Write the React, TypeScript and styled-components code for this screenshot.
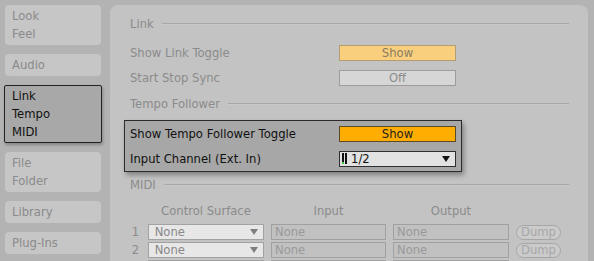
import styled, { createGlobalStyle, css } from 'styled-components';

const GlobalStyle = createGlobalStyle`
  html, body {
    margin: 0;
    padding: 0;
    background: #b3b3b3;
    font-family: "DejaVu Sans", "Liberation Sans", sans-serif;
    font-size: 11.6px;
    overflow: hidden;
  }
`;

const FADED = '#8b8b8b';

const Page = styled.div`
  display: flex;
  height: 261px;
  padding: 5px 6px 0 5px;
  box-sizing: border-box;
  gap: 9px;
  overflow: hidden;
`;

const Sidebar = styled.div`
  display: flex;
  flex-direction: column;
  gap: 9px;
  width: 96px;
  flex-shrink: 0;
`;

const Tab = styled.div<{ $active?: boolean }>`
  box-sizing: border-box;
  padding: 2px 7px;
  line-height: 18px;
  border-radius: 4px;
  background: #c6c6c6;
  color: ${FADED};
  ${({ $active }) =>
    $active &&
    css`
      margin: 0 -1px;
      padding: 1px 7px;
      border-radius: 2px;
      border: 1px solid #232323;
      background: #a8a8a8;
      color: #111;
      box-shadow: 1px 2px 3px rgba(0, 0, 0, 0.25);
    `}
`;

const Panel = styled.div`
  flex: 1;
  background: #c3c3c3;
  border-radius: 8px 8px 0 0;
  padding: 9px 19px 0 20px;
`;

const SectionHeader = styled.div`
  display: flex;
  align-items: center;
  gap: 8px;
  height: 20px;
  color: ${FADED};
`;

const Rule = styled.div`
  flex: 1;
  border-top: 1px solid #a8a8a8;
  border-bottom: 1px solid #c9c9c9;
`;

const Rows = styled.div`
  margin: 6px 0 4px;
`;

const Callout = styled.div`
  width: fit-content;
  margin: 6px 0 3px -6px;
  padding: 0 5px;
  border: 1px solid #2b2b2b;
  background: #a7a7a7;
  box-shadow: 2px 3px 5px rgba(0, 0, 0, 0.35);
  color: #111;
`;

const Row = styled.div`
  display: grid;
  grid-template-columns: 209px 117px;
  align-items: center;
  height: 25px;
`;

const Label = styled.span<{ $strong?: boolean }>`
  color: ${({ $strong }) => ($strong ? '#111' : FADED)};
  white-space: nowrap;
`;

const toggleColors = {
  pale: { bg: '#f9cf7e', border: '#b39d74', text: '#8a7c60' },
  off: { bg: '#d6d6d6', border: '#9c9c9c', text: '#8c8c8c' },
  on: { bg: '#ffad00', border: '#5c4a24', text: '#1d1d1d' },
};

const Toggle = styled.div<{ $variant: keyof typeof toggleColors }>`
  box-sizing: border-box;
  height: 16px;
  line-height: 14px;
  text-align: center;
  background: ${({ $variant }) => toggleColors[$variant].bg};
  border: 1px solid ${({ $variant }) => toggleColors[$variant].border};
  color: ${({ $variant }) => toggleColors[$variant].text};
`;

const Select = styled.div<{ $faded?: boolean }>`
  box-sizing: border-box;
  height: 16px;
  display: flex;
  align-items: center;
  gap: 4px;
  padding: 0 5px 0 2px;
  background: ${({ $faded }) => ($faded ? '#e7e7e7' : '#e2e2e2')};
  border: 1px solid ${({ $faded }) => ($faded ? '#a2a2a2' : '#2e2e2e')};
  color: ${({ $faded }) => ($faded ? '#888' : '#111')};
`;

const SelectText = styled.span`
  flex: 1;
`;

const Arrow = styled.span<{ $faded?: boolean }>`
  width: 0;
  height: 0;
  border-left: 4px solid transparent;
  border-right: 4px solid transparent;
  border-top: 6px solid ${({ $faded }) => ($faded ? '#7e7e7e' : '#111')};
`;

const Meter = styled.span`
  display: flex;
  gap: 1px;
  height: 11px;
`;

const MeterBar = styled.span<{ $level: number }>`
  width: 2px;
  background: linear-gradient(
    to top,
    #3fd24a 0,
    #3fd24a ${({ $level }) => $level}px,
    #111 ${({ $level }) => $level}px
  );
`;

const MidiGrid = styled.div`
  display: grid;
  grid-template-columns: 11px 116px 115px 116px 45px;
  column-gap: 7px;
  align-items: center;
`;

const ColumnHeads = styled(MidiGrid)`
  height: 18px;
  margin: 7px 0 3px;
  color: ${FADED};
  text-align: center;
`;

const MidiRow = styled(MidiGrid)`
  height: 18px;
`;

const Num = styled.span`
  text-align: center;
  color: ${FADED};
`;

const Field = styled.div`
  box-sizing: border-box;
  height: 16px;
  line-height: 14px;
  padding: 0 3px;
  border: 1px solid #a0a0a0;
  background: #c1c1c1;
  color: #999;
`;

const Dump = styled.div`
  box-sizing: border-box;
  height: 15px;
  line-height: 13px;
  text-align: center;
  border: 1px solid #a6a6a6;
  border-radius: 8px;
  background: #cbcbcb;
  color: #a7a7a7;
`;

const Header = ({ title }: { title: string }) => (
  <SectionHeader>
    <span>{title}</span>
    <Rule />
  </SectionHeader>
);

// the third slot is only peeking in at the bottom edge, no text visible
const midiRows = [
  { n: '1', label: 'None' },
  { n: '2', label: 'None' },
  { n: '', label: '' },
];

export default function App() {
  return (
    <>
      <GlobalStyle />
      <Page>
        <Sidebar>
          <Tab>Look<br />Feel</Tab>
          <Tab>Audio</Tab>
          <Tab $active>Link<br />Tempo<br />MIDI</Tab>
          <Tab>File<br />Folder</Tab>
          <Tab>Library</Tab>
          <Tab>Plug-Ins</Tab>
        </Sidebar>
        <Panel>
          <Header title="Link" />
          <Rows>
            <Row>
              <Label>Show Link Toggle</Label>
              <Toggle $variant="pale">Show</Toggle>
            </Row>
            <Row>
              <Label>Start Stop Sync</Label>
              <Toggle $variant="off">Off</Toggle>
            </Row>
          </Rows>

          <Header title="Tempo Follower" />
          <Callout>
            <Row>
              <Label $strong>Show Tempo Follower Toggle</Label>
              <Toggle $variant="on">Show</Toggle>
            </Row>
            <Row>
              <Label $strong>Input Channel (Ext. In)</Label>
              <Select>
                <Meter>
                  <MeterBar $level={2} />
                  <MeterBar $level={0} />
                </Meter>
                <SelectText>1/2</SelectText>
                <Arrow />
              </Select>
            </Row>
          </Callout>

          <Header title="MIDI" />
          <ColumnHeads>
            <span />
            <span>Control Surface</span>
            <span>Input</span>
            <span>Output</span>
            <span />
          </ColumnHeads>
          {midiRows.map((r, i) => (
            <MidiRow key={i}>
              <Num>{r.n}</Num>
              <Select $faded>
                <SelectText>{r.label && <>&nbsp;{r.label}</>}</SelectText>
                <Arrow $faded />
              </Select>
              <Field>{r.label}</Field>
              <Field>{r.label}</Field>
              <Dump>{r.label && 'Dump'}</Dump>
            </MidiRow>
          ))}
        </Panel>
      </Page>
    </>
  );
}
